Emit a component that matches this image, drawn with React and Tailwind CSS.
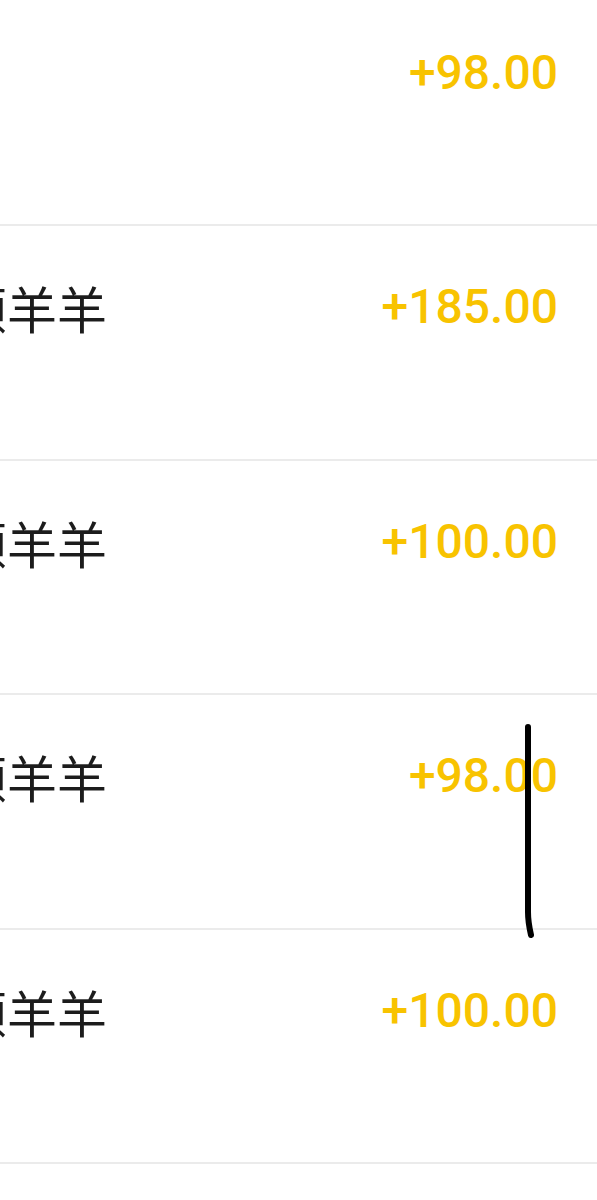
const rows = [
  { name: "", amount: "+98.00" },
  { name: "顿羊羊", amount: "+185.00" },
  { name: "顿羊羊", amount: "+100.00" },
  { name: "顿羊羊", amount: "+98.00" },
  { name: "顿羊羊", amount: "+100.00" },
];

export default function App() {
  return (
    <div className="relative w-[597px] h-[1200px] bg-white overflow-hidden">
      <div className="-mt-[8px]">
        {rows.map((r, i) => (
          <div
            key={i}
            className="h-[234.4px] border-b-2 border-[#ebebeb] flex items-start justify-between pt-[51px] pr-[39px]"
          >
            <div
              className="-ml-[43px] text-[50px] leading-[60px] text-[#1c1c1c] whitespace-nowrap"
              style={{ fontFamily: '"Noto Sans CJK SC", sans-serif' }}
            >
              {r.name}
            </div>
            <div
              className="text-[48px] leading-[60px] font-medium text-[#f8c300]"
              style={{ fontFamily: "Roboto, sans-serif" }}
            >
              {r.amount}
            </div>
          </div>
        ))}
      </div>

      {/* hand-drawn mark */}
      <svg
        className="absolute left-0 top-0 pointer-events-none"
        width="597"
        height="1200"
        viewBox="0 0 597 1200"
        fill="none"
      >
        <path
          d="M528 727 L528 912 Q528 922 531 935"
          stroke="#000"
          strokeWidth="6"
          strokeLinecap="round"
          strokeLinejoin="round"
        />
      </svg>
    </div>
  );
}
